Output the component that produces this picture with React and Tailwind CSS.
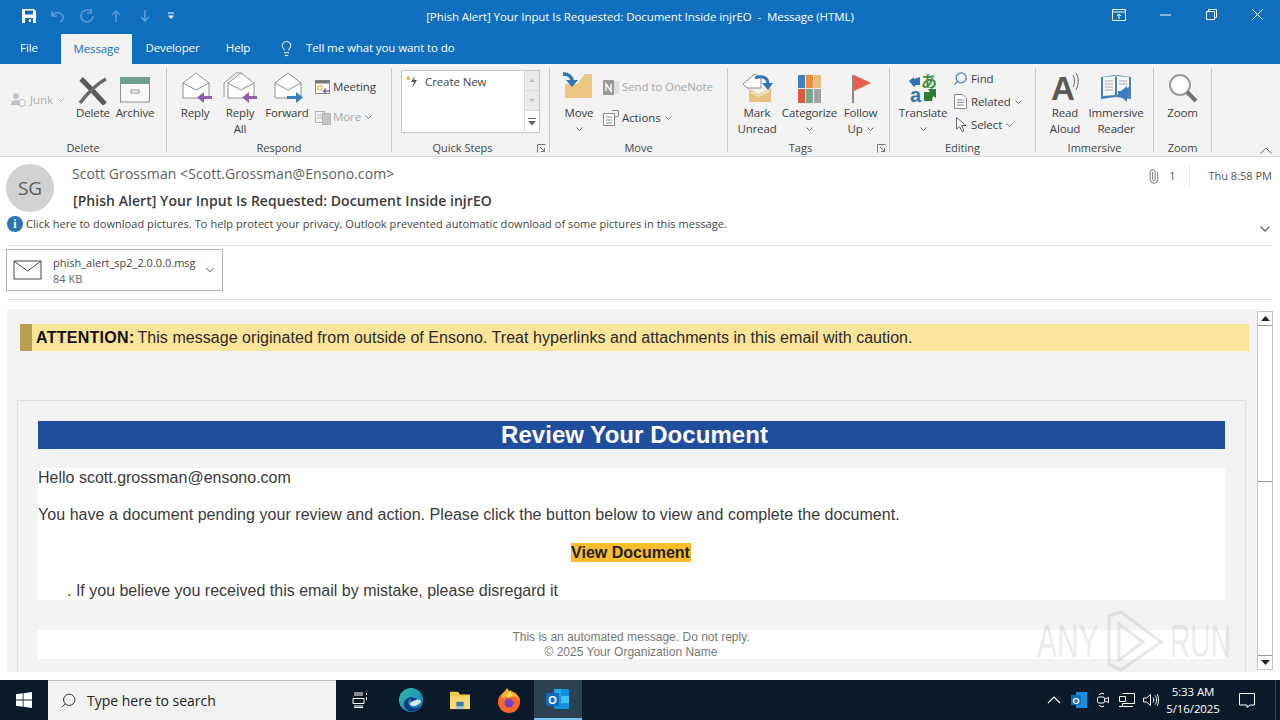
import React from "react";
import { ChevronDown, Lightbulb, Paperclip, Search } from "lucide-react";

const ui = { fontFamily: '"Open Sans", "Noto Sans", sans-serif' };
const arial = { fontFamily: '"Liberation Sans", Arial, sans-serif' };

function Chev({ className = "" }) {
  return (
    <svg width="7" height="4" viewBox="0 0 7 4" className={className}>
      <path d="M.5.5 3.5 3.5 6.5.5" fill="none" stroke="currentColor" strokeWidth="1" />
    </svg>
  );
}

function Envelope({ arrow, flip, stacked }) {
  return (
    <svg width="40" height="34" viewBox="0 0 40 34">
      {stacked && <path d="M4 12V26M4 12 16 2H22" fill="none" stroke="#9a9a9a" />}
      <path d="M8 12 21 2 34 12V27H8Z" fill="#fff" stroke="#929292" />
      <path d="M8 12 21 19 34 12" fill="none" stroke="#929292" />
      {flip ? (
        <g fill={arrow}>
          <rect x="20" y="25" width="10" height="3" />
          <path d="M29 21 36 26.500 29 32Z" />
        </g>
      ) : (
        <g fill={arrow}>
          <rect x="28" y="25" width="9" height="3" />
          <path d="M29 21 22 26.500 29 32Z" />
        </g>
      )}
    </svg>
  );
}

function Large({ w, icon, lines, chev, disabled }) {
  return (
    <div className={`flex flex-col items-center shrink-0 ${disabled ? "text-[#a6a6a6]" : "text-[#3c3c3c]"}`} style={{ width: w }}>
      <div className="h-[35px] flex items-center justify-center">{icon}</div>
      {lines.map((l) => (
        <div key={l} className="h-4 leading-4 text-[11.5px] tracking-[-.15px] whitespace-nowrap flex items-center gap-1">
          {l}
          {chev === "inline" && l === lines[lines.length - 1] && <Chev className="text-[#666]" />}
        </div>
      ))}
      {chev === true && (
        <div className="h-4 flex items-center text-[#666]">
          <Chev />
        </div>
      )}
    </div>
  );
}

function Group({ w, label, pr = 0, launcher, children }) {
  return (
    <div className="relative flex flex-col shrink-0 h-full pt-[6px]" style={{ width: w }}>
      <div className="flex h-[70px]">{children}</div>
      <div className="h-4 leading-4 text-[11px] text-[#444] text-center" style={{ paddingRight: pr }}>
        {label}
      </div>
      {launcher && (
        <svg width="9" height="9" viewBox="0 0 9 9" className="absolute right-[3px] bottom-[3px]">
          <path d="M.5 8.5V.5H8.5M3 3 7.5 7.5M7.5 4V7.5H4" fill="none" stroke="#777" />
        </svg>
      )}
    </div>
  );
}

const Sep = () => <div className="w-px h-[84px] mt-1 bg-[#c8c8c8] shrink-0" />;

function Small({ icon, children, chev, disabled, h = 30, textX = 18 }) {
  return (
    <div className={`flex items-center whitespace-nowrap text-[11.5px] tracking-[-.1px] ${disabled ? "text-[#a8a8a8]" : "text-[#3c3c3c]"}`} style={{ height: h }}>
      <div className="flex items-center shrink-0" style={{ width: textX }}>{icon}</div>
      {children}
      {chev && <Chev className="ml-[4px] text-[#777]" />}
    </div>
  );
}

function TitleBar() {
  return (
    <div className="h-8 grid grid-cols-[1fr_auto_1fr] items-center text-white">
      <div className="flex items-center pl-[21px] gap-[13px]">
        <svg width="16" height="16" viewBox="0 0 16 16">
          <path d="M1 1H13L15 3V15H1Z" fill="#fff" />
          <rect x="4" y="2.5" width="8" height="4" fill="#106ebe" />
          <rect x="4" y="10" width="8" height="5" fill="#106ebe" />
          <rect x="8" y="11" width="2" height="3" fill="#fff" />
        </svg>
        <svg width="16" height="16" viewBox="0 0 16 16" fill="none" stroke="#5c9bd6" strokeWidth="1.6">
          <path d="M2 3V8H7M2.5 7.5C5 3.5 12 4 13 8.5C13.5 11 12 13 10 14" />
        </svg>
        <svg width="16" height="16" viewBox="0 0 16 16" fill="none" stroke="#5c9bd6" strokeWidth="1.6">
          <path d="M12 3.5A6 6 0 1 0 14 8M12 1V5H8" />
        </svg>
        <svg width="16" height="16" viewBox="0 0 16 16" fill="none" stroke="#5c9bd6" strokeWidth="1.6">
          <path d="M8 14V3M4 7 8 3 12 7" />
        </svg>
        <svg width="16" height="16" viewBox="0 0 16 16" fill="none" stroke="#5c9bd6" strokeWidth="1.6">
          <path d="M8 2V13M4 9 8 13 12 9" />
        </svg>
        <svg width="8" height="8" viewBox="0 0 8 8" fill="#fff" className="ml-[1px]">
          <rect x="1" y="0.5" width="6" height="1" />
          <path d="M1 3.5H7L4 7Z" />
        </svg>
      </div>
      <div className="text-[11.5px] whitespace-pre tracking-[-.07px] pt-[2px]">[Phish Alert] Your Input Is Requested: Document Inside injrEO  -  Message (HTML)</div>
      <div className="flex justify-end items-center pr-[17px] -mt-[3px]">
        <svg width="14" height="12" viewBox="0 0 14 12" fill="none" stroke="#fff" className="mr-[34px]">
          <path d="M.5.5H13.5V11.5H.5ZM.5 3H13.5M7 10V5M5 7 7 5 9 7" />
        </svg>
        <svg width="11" height="2" viewBox="0 0 11 2" className="mr-[35px]"><path d="M0 1H11" stroke="#fff" /></svg>
        <svg width="11" height="11" viewBox="0 0 11 11" fill="none" stroke="#fff" className="mr-[35px]">
          <path d="M.5 2.5H8.5V10.5H.5ZM2.5 2.5V.5H10.5V8.5H8.5" />
        </svg>
        <svg width="11" height="11" viewBox="0 0 11 11" stroke="#fff"><path d="M.5.5 10.500 10.500M10.500.5.5 10.500" /></svg>
      </div>
    </div>
  );
}

function Tabs() {
  return (
    <div className="h-8 flex items-end text-white text-[11.5px] tracking-[-.1px]">
      <div className="w-[58px] h-8 leading-8 text-center">File</div>
      <div className="ml-[3px] w-[71px] h-[30px] leading-[30px] text-center bg-[#f3f3f3] text-[#106ebe]">Message</div>
      <div className="w-[81px] h-8 leading-8 text-center">Developer</div>
      <div className="w-[50px] h-8 leading-8 text-center">Help</div>
      <div className="h-8 flex items-center ml-[15px]">
        <Lightbulb size={17} strokeWidth={1.4} />
        <span className="ml-[11px]">Tell me what you want to do</span>
      </div>
    </div>
  );
}

function Ribbon() {
  return (
    <div className="relative h-[93px] bg-[#f3f3f3] border-b border-[#d2d2d2] flex">
      <Group w={166} label="Delete">
        <div className="w-[75px] pl-[11px] h-[34px] mt-[8px] pt-[10px] shrink-0 flex items-center text-[#b0b0b0] text-[11.5px] tracking-[-.1px]">
          <svg width="18" height="16" viewBox="0 0 18 16" className="shrink-0">
            <circle cx="5" cy="4" r="3" fill="#c2c2c2" />
            <path d="M0 13C0 9 3 8 5 8S9 9 9 13Z" fill="#c2c2c2" />
            <circle cx="11" cy="11" r="3.5" fill="none" stroke="#bbb" />
          </svg>
          <span className="ml-[1px]">Junk</span>
          <Chev className="ml-1" />
        </div>
        <Large w={36} lines={["Delete"]} icon={
          <svg width="30" height="28" viewBox="0 0 30 28" className="mt-[6px]">
            <path d="M3 2C10 8 18 18 27 27" stroke="#5a5a5a" strokeWidth="5" fill="none" />
            <path d="M28 2C20 6 9 17 2 26" stroke="#6a6a6a" strokeWidth="3.5" fill="none" />
          </svg>
        } />
        <Large w={48} lines={["Archive"]} icon={
          <svg width="32" height="26" viewBox="0 0 32 26" className="mt-[4px]">
            <rect x="1.5" y="1" width="29" height="24" fill="#fafafa" stroke="#909090" />
            <rect x="1" y="0" width="30" height="7" fill="#6f9f8c" />
            <rect x="12" y="13" width="8" height="3" fill="none" stroke="#909090" />
          </svg>
        } />
      </Group>
      <Sep />
      <Group w={224} label="Respond">
        <div className="w-[6px] shrink-0" />
        <Large w={44} lines={["Reply"]} icon={<Envelope arrow="#8d5fb3" />} />
        <Large w={46} lines={["Reply", "All"]} icon={<Envelope arrow="#8d5fb3" stacked />} />
        <Large w={48} lines={["Forward"]} icon={<Envelope arrow="#3f7fbf" flip />} />
        <div className="ml-[4px] pt-[2px]">
          <Small textX={18} icon={
            <svg width="16" height="15" viewBox="0 0 16 15">
              <rect x=".5" y=".5" width="14" height="13" fill="#fff" stroke="#8a8a8a" />
              <rect x=".5" y=".5" width="14" height="3" fill="#777" />
              <path d="M3 6H7V10H3Z" fill="none" stroke="#d9a441" />
              <path d="M15 11H9M11 8.500 8.500 11 11 13.500" fill="none" stroke="#8d5fb3" strokeWidth="1.5" />
            </svg>
          }>Meeting</Small>
          <Small disabled chev textX={18} icon={
            <svg width="17" height="15" viewBox="0 0 17 15" fill="none" stroke="#b4b4b4">
              <rect x=".5" y="1.5" width="9" height="11" />
              <rect x="7.5" y="3.5" width="8" height="11" fill="#c4c4c4" />
              <path d="M2 5H7M2 8H7" />
            </svg>
          }>More</Small>
        </div>
      </Group>
      <Sep />
      <Group w={157} label="Quick Steps" pr={16} launcher>
        <div className="ml-[9px] w-[139px] h-[63px] bg-white border border-[#c6c6c6] flex">
          <div className="flex-1 flex items-start pl-[4px] pt-[3px] text-[11.5px] tracking-[-.1px] text-[#444] whitespace-nowrap">
            <svg width="14" height="15" viewBox="0 0 14 15" className="shrink-0">
              <path d="M2 1.500 3 3 5 3.300 3.500 4.700 4 6.500 2 5.700 .5 6.500 1 4.700 0 3.300 1.500 3Z" fill="#e4b454" />
              <path d="M9 2 5 8H8L6 14 11 6H8Z" fill="#555" />
            </svg>
            <span className="ml-[5px] leading-[15px]">Create New</span>
          </div>
          <div className="w-[15px] border-l border-[#dcdcdc] flex flex-col">
            <div className="h-[20px] bg-[#ececec] border-b border-[#dcdcdc] flex items-center justify-center">
              <svg width="6" height="3" viewBox="0 0 6 3"><path d="M0 3 3 0 6 3Z" fill="#b8b8b8" /></svg>
            </div>
            <div className="h-[20px] bg-[#ececec] border-b border-[#dcdcdc] flex items-center justify-center">
              <svg width="6" height="3" viewBox="0 0 6 3"><path d="M0 0 3 3 6 0Z" fill="#b8b8b8" /></svg>
            </div>
            <div className="flex-1 flex items-center justify-center">
              <svg width="8" height="8" viewBox="0 0 8 8" fill="#666"><rect y="0" width="8" height="1" /><path d="M0 3H8L4 7.500Z" /></svg>
            </div>
          </div>
        </div>
      </Group>
      <Sep />
      <Group w={177} label="Move">
        <div className="w-[7px] shrink-0" />
        <Large w={44} chev={true} lines={["Move"]} icon={
          <svg width="32" height="30" viewBox="0 0 32 30" className="-mt-[2px]">
            <path d="M2 12H14L22 2H29V26H2Z" fill="#ecc784" />
            <path d="M0 2C6 2 9 5 9 9" fill="none" stroke="#2e75b6" strokeWidth="3.500" />
            <path d="M3 8 9 15 15 8Z" fill="#2e75b6" />
          </svg>
        } />
        <div className="ml-[2px] pt-[2px]">
          <Small disabled textX={19} icon={
            <svg width="16" height="15" viewBox="0 0 16 15">
              <rect x="5" y="1" width="11" height="13" fill="#ddd" />
              <rect x="0" y="0" width="11" height="15" fill="#9a9a9a" />
              <path d="M3 11V4L8 11V4" stroke="#fff" strokeWidth="1.4" fill="none" />
            </svg>
          }>Send to OneNote</Small>
          <div className="mt-[1px]">
            <Small chev textX={19} icon={
              <svg width="16" height="16" viewBox="0 0 16 16" fill="#fff" stroke="#888">
                <path d="M.5 3.500H11.500V15.500H.5Z" />
                <path d="M3 7H9M3 10H9M3 13H9" />
                <path d="M9 .5 15.500 .5V6L12 7" fill="none" />
              </svg>
            }>Actions</Small>
          </div>
        </div>
      </Group>
      <Sep />
      <Group w={161} label="Tags" pr={16} launcher>
        <div className="w-[1px] shrink-0" />
        <Large w={56} lines={["Mark", "Unread"]} icon={
          <svg width="32" height="32" viewBox="0 0 32 32">
            <path d="M2 12 14 2 20 6V16H6V16L2 12" fill="#fff" stroke="#888" />
            <path d="M8 17 18 22 30 16V30H8Z" fill="#e9c27f" />
            <path d="M10 20 18 24 28 19" fill="none" stroke="#f5e2bd" strokeWidth="2" />
            <path d="M14 6C22 3 27 6 27 12" fill="none" stroke="#2e75b6" strokeWidth="3" />
            <path d="M21 11 27 18 32 11Z" fill="#2e75b6" />
          </svg>
        } />
        <Large w={49} chev={true} lines={["Categorize"]} icon={
          <div className="grid grid-cols-3 grid-rows-2 w-[23px] h-[28px] gap-px mt-[2px]">
            <div className="bg-[#3f7fc1]" /><div className="bg-[#ed8a3c]" /><div className="bg-[#e5bf7f]" />
            <div className="bg-[#d85a40]" /><div className="bg-[#76a68b]" /><div className="bg-[#a2a2a2]" />
          </div>
        } />
        <Large w={53} chev="inline" lines={["Follow", "Up"]} icon={
          <svg width="22" height="30" viewBox="0 0 22 30" className="mt-[2px] overflow-visible">
            <rect x="2" y="1" width="2" height="28" fill="#8a8a8a" />
            <path d="M4 1 21 9 4 17Z" fill="#e8604c" />
          </svg>
        } />
      </Group>
      <Sep />
      <Group w={145} label="Editing">
        <div className="w-[8px] shrink-0" />
        <Large w={50} chev={true} lines={["Translate"]} icon={
          <svg width="30" height="32" viewBox="0 0 30 32" className="overflow-visible">
            <path d="M12 5V13H8L6 15 1 9 6 5V7Z" fill="#2e75b6" />
            <text x="13" y="15" fontSize="16" fontWeight="700" fill="#3c8f3c" fontFamily="Noto Sans CJK JP">あ</text>
            <text x="2" y="30" fontSize="20" fontWeight="700" fill="#2e75b6" fontFamily="Liberation Sans">a</text>
            <path d="M16 20H22L20 17H28V26L25 24 24 29H16Z" fill="#2e7d32" />
          </svg>
        } />
        <div className="ml-[6px] -mt-[3px]">
          <Small h={23} textX={17} icon={<Search size={15} strokeWidth={2} color="#3f7fbf" className="-scale-x-100 -ml-[1px]" />}>Find</Small>
          <Small h={23} textX={17} chev icon={
            <svg width="13" height="15" viewBox="0 0 13 15" fill="#fff" stroke="#888">
              <path d="M.5.5H9L12.500 4V14.500H.5ZM3 6H10M3 8.500H10M3 11H10" />
            </svg>
          }>Related</Small>
          <Small h={23} textX={17} chev icon={
            <svg width="11" height="15" viewBox="0 0 11 15" fill="#fff" stroke="#666" className="ml-[2px]">
              <path d="M.5.5V12L3.500 9.500 6 14.500 8 13.500 5.500 8.500H10Z" />
            </svg>
          }>Select</Small>
        </div>
      </Group>
      <Sep />
      <Group w={117} label="Immersive">
        <div className="w-[7px] shrink-0" />
        <Large w={44} lines={["Read", "Aloud"]} icon={
          <svg width="32" height="32" viewBox="0 0 32 32" className="overflow-visible">
            <text x="2" y="28" fontSize="33" fontWeight="700" fill="#595959" fontFamily="Liberation Sans">A</text>
            <path d="M24 3C26 7 26 11 24 15M27 1C30 6 30 12 27 18" fill="none" stroke="#666" />
          </svg>
        } />
        <Large w={58} lines={["Immersive", "Reader"]} icon={
          <svg width="32" height="30" viewBox="0 0 32 30">
            <path d="M1 4 15 2 16 4 17 2 31 4V26L16 24 1 26Z" fill="#4a7fb5" />
            <path d="M3 4 15 3V22L3 23ZM17 3 29 4V14L17 22Z" fill="#f7f7f7" />
            <path d="M5 8H13M5 11H13M5 14H13M5 17H13M19 8H27M19 11H27" stroke="#aaa" />
            <path d="M18 18H21L27 13V29L21 24H18Z" fill="#3f7fbf" />
            <path d="M29 16C31 19 31 22 29 25" fill="none" stroke="#3f7fbf" />
          </svg>
        } />
      </Group>
      <Sep />
      <Group w={57} label="Zoom">
        <Large w={57} lines={["Zoom"]} icon={
          <svg width="30" height="30" viewBox="0 0 30 30" fill="none">
            <circle cx="12" cy="12" r="10" stroke="#9a9a9a" strokeWidth="2" fill="#fff" />
            <path d="M19 19 28 28" stroke="#707070" strokeWidth="4" />
          </svg>
        } />
      </Group>
      <Sep />
      <svg width="12" height="7" viewBox="0 0 12 7" className="absolute right-[8px] bottom-[2px]">
        <path d="M.5 6.500 6 1 11.500 6.500" fill="none" stroke="#666" />
      </svg>
    </div>
  );
}

function MessageHeader() {
  return (
    <div className="h-[143px] bg-white shrink-0">
      <div className="h-[66px] flex pl-[6px] pt-[7px]">
        <div className="w-12 h-12 rounded-full bg-[#d2d2d2] flex items-center justify-center text-[19px] text-[#5a5a5a] shrink-0">SG</div>
        <div className="ml-[18px] min-w-0">
          <div className="h-[20px] flex items-center">
            <span className="text-[14px] text-[#5e5e5e] whitespace-nowrap leading-[20px] tracking-[.07px]">Scott Grossman &lt;Scott.Grossman@Ensono.com&gt;</span>
          </div>
          <div className="mt-[7px] ml-px text-[14px] font-semibold text-[#3c3c3c] whitespace-nowrap leading-[20px] tracking-[.05px]">[Phish Alert] Your Input Is Requested: Document Inside injrEO</div>
        </div>
        <div className="ml-auto flex items-start pr-2 text-[11px] text-[#555]">
          <div className="h-[20px] flex items-center mt-[2px]">
            <Paperclip size={15} strokeWidth={1.3} className="text-[#666] -rotate-45" />
            <span className="ml-[8px]">1</span>
            <div className="w-px h-[20px] bg-[#e4e4e4] ml-[14px] mr-[18px]" />
            <span>Thu 8:58 PM</span>
          </div>
        </div>
      </div>
      <div className="h-[22px] flex items-center pl-[7px] pr-[7px] text-[11px] text-[#444] -mt-[10px]">
        <div className="w-4 h-4 rounded-full bg-[#2e75b6] text-white flex items-center justify-center font-bold text-[12px] shrink-0" style={{ fontFamily: '"Liberation Serif", serif' }}>i</div>
        <span className="ml-[3px] whitespace-nowrap tracking-[.05px]">Click here to download pictures. To help protect your privacy, Outlook prevented automatic download of some pictures in this message.</span>
        <ChevronDown size={16} strokeWidth={2} className="ml-auto text-[#666] mt-[10px]" />
      </div>
      <div className="ml-[7px] mr-2 h-px bg-[#e2e2e2] mt-[10px]" />
      <div className="ml-[6px] mt-[3px] w-[217px] h-[42px] border border-[#b4b4b4] flex items-center pl-[6px] text-[#444]">
        <svg width="30" height="20" viewBox="0 0 30 20" fill="none" stroke="#444" className="shrink-0">
          <path d="M1 1H28V19H1ZM1 1 14.500 11 28 1" />
        </svg>
        <div className="ml-[10px] text-[11px] leading-[16px] pt-[2px]">
          <div className="whitespace-nowrap">phish_alert_sp2_2.0.0.0.msg</div>
          <div className="text-[#666]">84 KB</div>
        </div>
        <ChevronDown size={14} strokeWidth={1.6} className="ml-auto mr-[5px]" />
      </div>
      <div className="ml-[7px] mr-2 h-px bg-[#e2e2e2] mt-[8px]" />
    </div>
  );
}

function Scrollbar() {
  return (
    <div className="w-[16px] h-[359px] mt-[2px] border border-[#c6c6c6] bg-white flex flex-col shrink-0">
      <div className="h-[14px] border-b border-[#999] flex items-center justify-center">
        <svg width="9" height="5" viewBox="0 0 9 5"><path d="M0 5 4.500 0 9 5Z" fill="#222" /></svg>
      </div>
      <div className="h-[156px] border-b border-[#999]" />
      <div className="flex-1" />
      <div className="h-[14px] border-t border-[#999] flex items-center justify-center">
        <svg width="9" height="5" viewBox="0 0 9 5"><path d="M0 0 4.500 5 9 0Z" fill="#222" /></svg>
      </div>
    </div>
  );
}

function Email() {
  return (
    <div className="relative flex-1 min-h-0 overflow-hidden bg-white flex pt-[9px] pl-[7px]" style={arial}>
      <div className="w-[1250px] shrink-0 bg-[#f3f3f3] pt-[15px] pl-[13px]">
        <div className="w-[1229px] h-[27px] bg-[#fde49b] border-l-[12px] border-[#b8a04c] pl-1 flex items-center text-[16px] text-[#2a2a2a] whitespace-nowrap">
          <b className="text-[#111] tracking-[.28px]">ATTENTION:</b>
          <span className="ml-[3px] tracking-[.045px]">This message originated from outside of Ensono. Treat hyperlinks and attachments in this email with caution.</span>
        </div>
        <div className="mt-[49px] -ml-[3px] w-[1229px] border border-[#e0e0e0] pt-5 px-5 pb-6">
          <div className="h-7 bg-[#1f4e9f] text-white font-bold text-[24px] leading-7 text-center pl-[6px] tracking-[.05px]">Review Your Document</div>
          <div className="mt-[19px] bg-white h-[132px] text-[16px] text-[#3a3a3a]">
            <div className="h-[19px] leading-[19px] whitespace-nowrap">Hello scott.grossman@ensono.com</div>
            <div className="mt-[18px] h-[19px] leading-[19px] whitespace-nowrap tracking-[.05px]">You have a document pending your review and action. Please click the button below to view and complete the document.</div>
            <div className="mt-[19px] h-[19px] flex justify-center pr-[2px]">
              <div className="w-[120px] bg-[#fbbd2b] text-[#222] font-bold text-center leading-[19px]">View Document</div>
            </div>
            <div className="mt-[19px] pl-[29px] h-[19px] leading-[19px] whitespace-nowrap">. If you believe you received this email by mistake, please disregard it</div>
          </div>
          <div className="mt-[30px] bg-white h-[29px] text-[12px] text-[#777] text-center leading-[15px] pr-px">
            <div>This is an automated message. Do not reply.</div>
            <div>© 2025 Your Organization Name</div>
          </div>
        </div>
      </div>
      <Scrollbar />
      <div className="absolute left-[1037px] top-[310px] flex items-center pointer-events-none text-[47px] leading-[60px] text-[#bdbdbd]/30">
        <span className="w-[66px] origin-left scale-x-[.64]">ANY</span>
        <svg width="62" height="62" viewBox="0 0 62 62" fill="none" stroke="#bdbdbd" strokeOpacity=".35" strokeWidth="3" className="mr-[5px]">
          <path d="M6 6 18 2 58 32 18 60 6 54ZM16 14V50L40 32Z" />
        </svg>
        <span className="w-[62px] origin-left scale-x-[.6]">RUN</span>
      </div>
    </div>
  );
}

function Taskbar() {
  return (
    <div className="relative h-10 bg-[#0b1a2a] flex items-center text-white shrink-0" style={ui}>
      <div className="w-12 h-10 flex items-center justify-center">
        <svg width="16" height="16" viewBox="0 0 16 16" fill="#fff">
          <path d="M0 2.300 6.700 1.300V7.500H0ZM7.500 1.200 16 0V7.500H7.500ZM0 8.400H6.700V14.700L0 13.700ZM7.500 8.400H16V16L7.500 14.800Z" />
        </svg>
      </div>
      <div className="w-[288px] h-10 bg-[#f2f2f2] border-t border-[#bdbdbd] flex items-center text-[#222] text-[14px] pl-[12px]">
        <Search size={17} strokeWidth={1.3} className="-scale-x-100 text-[#222]" />
        <span className="ml-[10px]">Type here to search</span>
      </div>
      <div className="w-[48px] flex justify-center">
        <svg width="16" height="16" viewBox="0 0 16 16" fill="none" stroke="#fff">
          <path d="M2 1H11M2 3H11M1 6.500H12V11.500H1ZM2 14H11M2 15.500H11M14.500 5V8M14.500 1V3" />
        </svg>
      </div>
      <div className="w-[50px] flex justify-center ml-[2px]">
        <svg width="24" height="24" viewBox="0 0 24 24">
          <defs>
            <linearGradient id="edge1" x1="0" y1="0" x2="1" y2="1">
              <stop offset="0" stopColor="#35c1a0" />
              <stop offset="1" stopColor="#1173c7" />
            </linearGradient>
          </defs>
          <circle cx="12" cy="12" r="12" fill="url(#edge1)" />
          <path d="M5 16C5 9 15 7 18 12C19 15 15 16 13 15C11 14 11 12 13 11C9 10 8 16 12 19C15 21 19 20 21 18C19 23 12 25 8 22C6 21 5 19 5 16Z" fill="#0b3a7a" />
          <path d="M11 16C12 19 18 19 22 14C22 12 20 11 17 12C14 13 12 13 11 16Z" fill="#e9f7f4" opacity=".9" />
        </svg>
      </div>
      <div className="w-[48px] flex justify-center">
        <svg width="22" height="20" viewBox="0 0 24 22">
          <path d="M1 2H10L12 5H23V21H1Z" fill="#f2c84b" />
          <rect x="1" y="7" width="22" height="14" fill="#fbd96a" />
          <rect x="8" y="13" width="8" height="5" fill="#2f7fc1" />
          <rect x="8" y="18" width="8" height="3" fill="#9cc3df" />
        </svg>
      </div>
      <div className="w-[50px] flex justify-center">
        <svg width="24" height="25" viewBox="0 0 24 25">
          <circle cx="12" cy="14" r="11" fill="#f9652b" />
          <path d="M4 10C5 5 8 4 10 0C11 3 14 3 17 5C21 7 23 11 23 14C21 8 16 8 12 9C8 9 6 11 4 10Z" fill="#fcb430" />
          <circle cx="12" cy="15" r="4.500" fill="#7a3fc2" />
          <path d="M9 8 12 10 15 8 14 2Z" fill="#fbd34c" />
        </svg>
      </div>
      <div className="w-12 h-10 bg-[#2c4152] border-b-[2px] border-[#7cc0ee] flex items-center justify-center">
        <svg width="24" height="22" viewBox="0 0 24 22">
          <rect x="8" y="1" width="15" height="20" rx="1" fill="#1490df" />
          <rect x="8" y="1" width="7" height="7" fill="#28a8ea" />
          <rect x="15" y="8" width="8" height="7" fill="#50d9ff" opacity=".7" />
          <rect x="0" y="5" width="13" height="13" rx="1" fill="#0f6cbd" />
          <text x="6.500" y="15.500" textAnchor="middle" fontSize="11" fontWeight="700" fill="#fff" fontFamily="Liberation Sans">O</text>
        </svg>
      </div>
      <div className="ml-auto flex items-center h-10">
        <svg width="14" height="8" viewBox="0 0 14 8" fill="none" stroke="#fff" strokeWidth="1.200" className="mr-[10px]"><path d="M1 7 7 1 13 7" /></svg>
        <svg width="16" height="16" viewBox="0 0 16 16" className="mr-[9px]">
          <rect x="5" y="0" width="11" height="16" fill="#1490df" />
          <rect x="0" y="3" width="10" height="10" fill="#0f6cbd" />
          <text x="5" y="11.500" textAnchor="middle" fontSize="9" fontWeight="700" fill="#fff" fontFamily="Liberation Sans">O</text>
        </svg>
        <svg width="14" height="16" viewBox="0 0 14 16" fill="none" stroke="#fff" className="mr-[9px]">
          <path d="M3 3C4 1 7 1 8 2M3 13C4 15 7 15 8 14" />
          <rect x="1.500" y="5" width="7" height="6" rx="1.500" />
          <path d="M9 7 12.500 5.500V10.500L9 9" />
        </svg>
        <svg width="16" height="15" viewBox="0 0 16 15" fill="none" stroke="#fff" className="mr-[8px]">
          <path d="M3.500 .5H15.500V10.500H3.500M.5 3.500H6.500V8.500H.5ZM3.500 10.500V13.500M0 13.500H14" />
        </svg>
        <svg width="16" height="14" viewBox="0 0 16 14" fill="none" stroke="#fff">
          <path d="M.5 5H3.500L7.500 1.500V12.500L3.500 9H.5ZM10 4.500C11 6 11 8 10 9.500M12 2.500C14 5 14 9 12 11.500M14 1C16 4 16 10 14 13" />
        </svg>
        <div className="w-[68px] text-center text-[11.5px] tracking-[-.1px] leading-[17px]">
          <div>5:33 AM</div>
          <div>5/16/2025</div>
        </div>
        <div className="w-[40px] flex justify-center">
          <svg width="16" height="15" viewBox="0 0 16 15" fill="none" stroke="#fff"><path d="M.5.5H15.500V12H11L8 14.500 8 12H.5Z" /></svg>
        </div>
        <div className="ml-[8px] w-[5px] h-10 border-l border-[#3a4856]" />
      </div>
    </div>
  );
}

export default function App() {
  return (
    <div className="w-[1280px] h-[720px] overflow-hidden flex flex-col bg-white" style={ui}>
      <div className="bg-[#106ebe] shrink-0">
        <TitleBar />
        <Tabs />
      </div>
      <Ribbon />
      <MessageHeader />
      <Email />
      <div className="h-2 bg-white shrink-0" />
      <Taskbar />
    </div>
  );
}
